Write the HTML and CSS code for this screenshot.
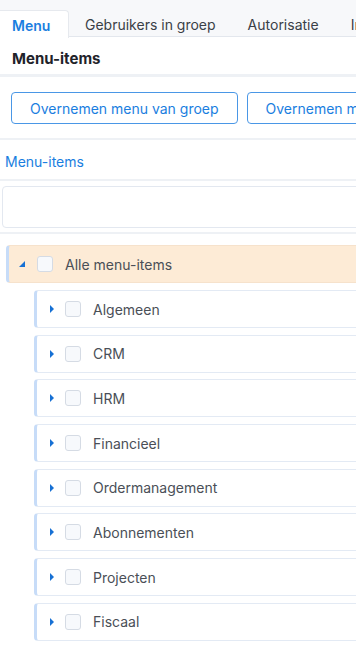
FILE: index.html
```html
<!DOCTYPE html>
<html lang="nl">
<head>
    <meta charset="UTF-8">
    <meta name="viewport" content="width=device-width, initial-scale=1.0">
    <title>Menu-items</title>
    <link rel="stylesheet" href="styles.css">
</head>
<body>
    <div class="tabs">
        <div class="tab active">Menu</div>
        <div class="tab">Gebruikers in groep</div>
        <div class="tab">Autorisatie</div>
        <div class="tab">Instellingen</div>
    </div>

    <div class="panel-header">Menu-items</div>

    <div class="actions">
        <button class="btn">Overnemen menu van groep</button>
        <button class="btn">Overnemen menu van gebruiker</button>
    </div>

    <div class="section">
        <a class="section-link" href="#">Menu-items</a>
    </div>

    <div class="search">
        <input type="text" class="search-input">
    </div>

    <div class="tree">
        <div class="node root">
            <span class="toggle open"></span>
            <span class="check"></span>
            <span class="label">Alle menu-items</span>
        </div>
        <div class="children">
            <div class="node"><span class="toggle"></span><span class="check"></span><span class="label">Algemeen</span></div>
            <div class="node"><span class="toggle"></span><span class="check"></span><span class="label">CRM</span></div>
            <div class="node"><span class="toggle"></span><span class="check"></span><span class="label">HRM</span></div>
            <div class="node"><span class="toggle"></span><span class="check"></span><span class="label">Financieel</span></div>
            <div class="node"><span class="toggle"></span><span class="check"></span><span class="label">Ordermanagement</span></div>
            <div class="node"><span class="toggle"></span><span class="check"></span><span class="label">Abonnementen</span></div>
            <div class="node"><span class="toggle"></span><span class="check"></span><span class="label">Projecten</span></div>
            <div class="node"><span class="toggle"></span><span class="check"></span><span class="label">Fiscaal</span></div>
        </div>
    </div>
</body>
</html>
```

FILE: styles.css
```css
body {
    font-family: Inter, 'Noto Sans', sans-serif;
    margin: 0;
    padding: 0;
    background: #ffffff;
    color: #2b2f36;
    overflow: hidden;
    width: 356px;
}

.tabs {
    display: flex;
    background: #f7f8fa;
    height: 37px;
    border-bottom: 1px solid #e3e7ed;
    padding-top: 10px;
    box-sizing: border-box;
    white-space: nowrap;
}

.tab {
    flex-shrink: 0;
    font-size: 14px;
    color: #3a3f47;
    padding: 6px 16px 0 16px;
    height: 27px;
    box-sizing: border-box;
}

.tab.active {
    background: #ffffff;
    color: #1a7ee0;
    font-weight: 600;
    padding: 6px 12px 0 12px;
    width: 69px;
    border-top: 1px solid #e6e9ee;
    border-right: 1px solid #e6e9ee;
    border-top-right-radius: 4px;
    height: 28px;
    margin-bottom: -1px;
}

.panel-header {
    font-size: 15px;
    font-weight: 700;
    color: #1f232a;
    padding: 12px 12px 0 12px;
    height: 40px;
    box-sizing: border-box;
    border-bottom: 3px solid #eef1f5;
}

.actions {
    display: flex;
    gap: 9px;
    padding: 15px 11px 14px 11px;
    border-bottom: 2px solid #eef1f5;
    white-space: nowrap;
}

.btn {
    font-family: Inter, 'Noto Sans', sans-serif;
    font-size: 14px;
    color: #1a7ee0;
    background: #ffffff;
    border: 1px solid #4a97e6;
    border-radius: 4px;
    height: 32px;
    padding: 0 18px;
    flex-shrink: 0;
}

.section {
    padding: 11px 5px 0 5px;
    height: 41px;
    box-sizing: border-box;
    border-bottom: 2px solid #eef1f5;
}

.section-link {
    font-size: 14px;
    color: #1a7ee0;
    text-decoration: none;
}

.search {
    padding: 5px 0 4px 2px;
    border-bottom: 2px solid #eef1f5;
}

.search-input {
    display: block;
    width: 380px;
    height: 42px;
    border: 1px solid #e3e8f0;
    border-radius: 4px;
    box-sizing: border-box;
}

.tree {
    padding: 11px 0 0 6px;
}

.node {
    display: flex;
    align-items: center;
    height: 38px;
    border: 1px solid #e3eaf4;
    border-left: 3px solid #c7dcf8;
    border-right: none;
    border-radius: 4px 0 0 4px;
    background: #ffffff;
    box-sizing: border-box;
    padding-left: 13px;
}

.node.root {
    background: #fdebd6;
    border-color: #f6e2cc;
    border-left-color: #c7dcf8;
    padding-left: 10px;
}

.children {
    display: flex;
    flex-direction: column;
    gap: 6.7px;
    padding: 7px 0 0 28px;
}

.toggle {
    width: 0;
    height: 0;
    border-top: 4px solid transparent;
    border-bottom: 4px solid transparent;
    border-left: 4px solid #1670d4;
    margin-right: 11px;
}

.toggle.open {
    border-top: none;
    border-left: 6px solid transparent;
    border-bottom: 6px solid #1670d4;
    margin-right: 12px;
}

.check {
    width: 16px;
    height: 16px;
    border: 1px solid #d5dbe4;
    border-radius: 3px;
    background: #f7f9fc;
    box-sizing: border-box;
    margin-right: 12px;
}

.label {
    font-size: 14px;
    color: #4a4f57;
}
```
